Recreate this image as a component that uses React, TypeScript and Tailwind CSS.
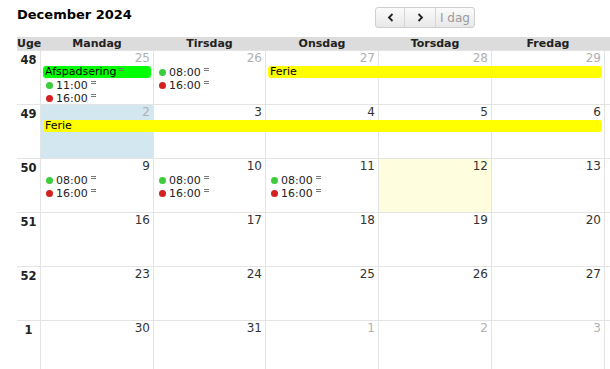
import React from 'react';

type Entry = { time: string; color: 'green' | 'red' };
type Bar = { label: string; color: string; start: number; span: number; note?: boolean };
type Day = { n: number; muted?: boolean; bg?: string; entries?: Entry[]; row?: number };
type Week = { nr: number; days: Day[]; bars: Bar[] };

const weeks: Week[] = [
    {
        nr: 48,
        bars: [
            { label: 'Afspadsering', color: 'bg-[#00ff00]', start: 2, span: 1, note: true },
            { label: 'Ferie', color: 'bg-[#ffff00]', start: 4, span: 3 },
        ],
        days: [
            { n: 25, muted: true, row: 3, entries: [{ time: '11:00', color: 'green' }, { time: '16:00', color: 'red' }] },
            { n: 26, muted: true, row: 2, entries: [{ time: '08:00', color: 'green' }, { time: '16:00', color: 'red' }] },
            { n: 27, muted: true },
            { n: 28, muted: true },
            { n: 29, muted: true },
        ],
    },
    {
        nr: 49,
        bars: [{ label: 'Ferie', color: 'bg-[#ffff00]', start: 2, span: 5 }],
        days: [{ n: 2, muted: true, bg: 'bg-[#d2e7ef]' }, { n: 3 }, { n: 4 }, { n: 5 }, { n: 6 }],
    },
    {
        nr: 50,
        bars: [],
        days: [
            { n: 9, row: 2, entries: [{ time: '08:00', color: 'green' }, { time: '16:00', color: 'red' }] },
            { n: 10, row: 2, entries: [{ time: '08:00', color: 'green' }, { time: '16:00', color: 'red' }] },
            { n: 11, row: 2, entries: [{ time: '08:00', color: 'green' }, { time: '16:00', color: 'red' }] },
            { n: 12, bg: 'bg-[#fefede]' },
            { n: 13 },
        ],
    },
    { nr: 51, bars: [], days: [{ n: 16 }, { n: 17 }, { n: 18 }, { n: 19 }, { n: 20 }] },
    { nr: 52, bars: [], days: [{ n: 23 }, { n: 24 }, { n: 25 }, { n: 26 }, { n: 27 }] },
    { nr: 1, bars: [], days: [{ n: 30 }, { n: 31 }, { n: 1, muted: true }, { n: 2, muted: true }, { n: 3, muted: true }] },
];

const colStart = ['col-start-2', 'col-start-3', 'col-start-4', 'col-start-5', 'col-start-6'];
const spanCls: Record<number, string> = { 1: 'col-span-1', 3: 'col-span-3', 5: 'col-span-5' };
const rowStart: Record<number, string> = { 2: 'row-start-2', 3: 'row-start-3', 4: 'row-start-4' };

const cols = 'grid grid-cols-[23px_112px_111px_112px_112px_112px_1fr] gap-x-px';

// tiny "note" marker shown after events
const Note = () => (
    <svg width="5" height="4" viewBox="0 0 5 4" className="ml-[3px] mb-[5px] inline-block">
        <rect x="0" y="0" width="5" height="1" fill="#777" />
        <rect x="0" y="2" width="5" height="1" fill="#777" />
    </svg>
);

export default function App() {
    return (
        <div className="w-[610px] h-[369px] overflow-hidden bg-white text-[11px] text-[#222]" style={{ fontFamily: '"DejaVu Sans", Verdana, sans-serif' }}>
            {/* Toolbar */}
            <div className="relative h-[37px] pl-[17px]">
                <h1 className="pt-[5px] text-[13px] font-bold text-black">December 2024</h1>
                <div className="absolute left-[375px] top-[7px] flex h-[21px] rounded-[3px] border border-[#cfcfcf] bg-gradient-to-b from-[#fbfbfb] to-[#e8e8e8] text-[12px]">
                    <div className="flex w-[29px] items-center justify-center border-r border-[#d6d6d6]">
                        <svg width="7" height="9" viewBox="0 0 7 9"><path d="M5.5 1 L2 4.5 L5.5 8" fill="none" stroke="#222" strokeWidth="1.8" /></svg>
                    </div>
                    <div className="flex w-[31px] items-center justify-center border-r border-[#d6d6d6]">
                        <svg width="7" height="9" viewBox="0 0 7 9"><path d="M1.5 1 L5 4.5 L1.5 8" fill="none" stroke="#222" strokeWidth="1.8" /></svg>
                    </div>
                    <div className="flex w-[38px] items-center justify-center text-[#9a9a9a]">I dag</div>
                </div>
            </div>

            <div className="ml-[17px] flex flex-col gap-y-px bg-[#e4e4e4]">
                {/* Header */}
                <div className={`${cols} h-[13px] bg-[#dcdcdc] font-bold leading-[13px]`}>
                    <div className="text-left">Uge</div>
                    {['Mandag', 'Tirsdag', 'Onsdag', 'Torsdag', 'Fredag'].map(d => (
                        <div key={d} className="text-center">{d}</div>
                    ))}
                    <div />
                </div>

                {weeks.map(w => (
                    <div key={w.nr} className={`${cols} h-[53px] shrink-0 grid-rows-[15px_13px_13px_12px] overflow-hidden bg-[#e4e4e4]`}>
                        <div className="row-span-4 bg-white pt-[1px] text-center text-[11.5px] font-bold">{w.nr}</div>
                        {w.days.map((d, i) => (
                            <div key={i} className={`${colStart[i]} row-start-1 row-span-4 ${d.bg ?? 'bg-white'}`} />
                        ))}
                        <div className="col-start-7 row-start-1 row-span-4 bg-white" />
                        {w.days.map((d, i) => (
                            <div key={'n' + i} className={`${colStart[i]} row-start-1 z-10 pr-[3px] pt-[1px] text-right text-[12px] leading-[13px] ${d.muted ? 'text-[#b0b0b0]' : 'text-[#333]'}`}>
                                {d.n}
                            </div>
                        ))}
                        {w.bars.map((b, i) => (
                            <div key={'b' + i} className={`${colStart[b.start - 2]} ${spanCls[b.span]} row-start-2 z-10 mx-[2px] h-[12px] rounded-[3px] ${b.color} pl-[2px] text-[11px] leading-[12px] text-black`}>
                                {b.label}{b.note && <Note />}
                            </div>
                        ))}
                        {w.days.map((d, i) =>
                            (d.entries ?? []).map((e, j) => (
                                <div key={'e' + i + j} className={`${colStart[i]} ${rowStart[(d.row ?? 2) + j]} z-10 flex items-center pl-[5px] text-[11px] leading-[13px]`}>
                                    <span className={`mr-[3px] inline-block h-[7px] w-[7px] rounded-full ${e.color === 'green' ? 'bg-[#3ccc3c]' : 'bg-[#d42020]'}`} />
                                    {e.time}
                                    <Note />
                                </div>
                            ))
                        )}
                    </div>
                ))}
            </div>
        </div>
    );
}
